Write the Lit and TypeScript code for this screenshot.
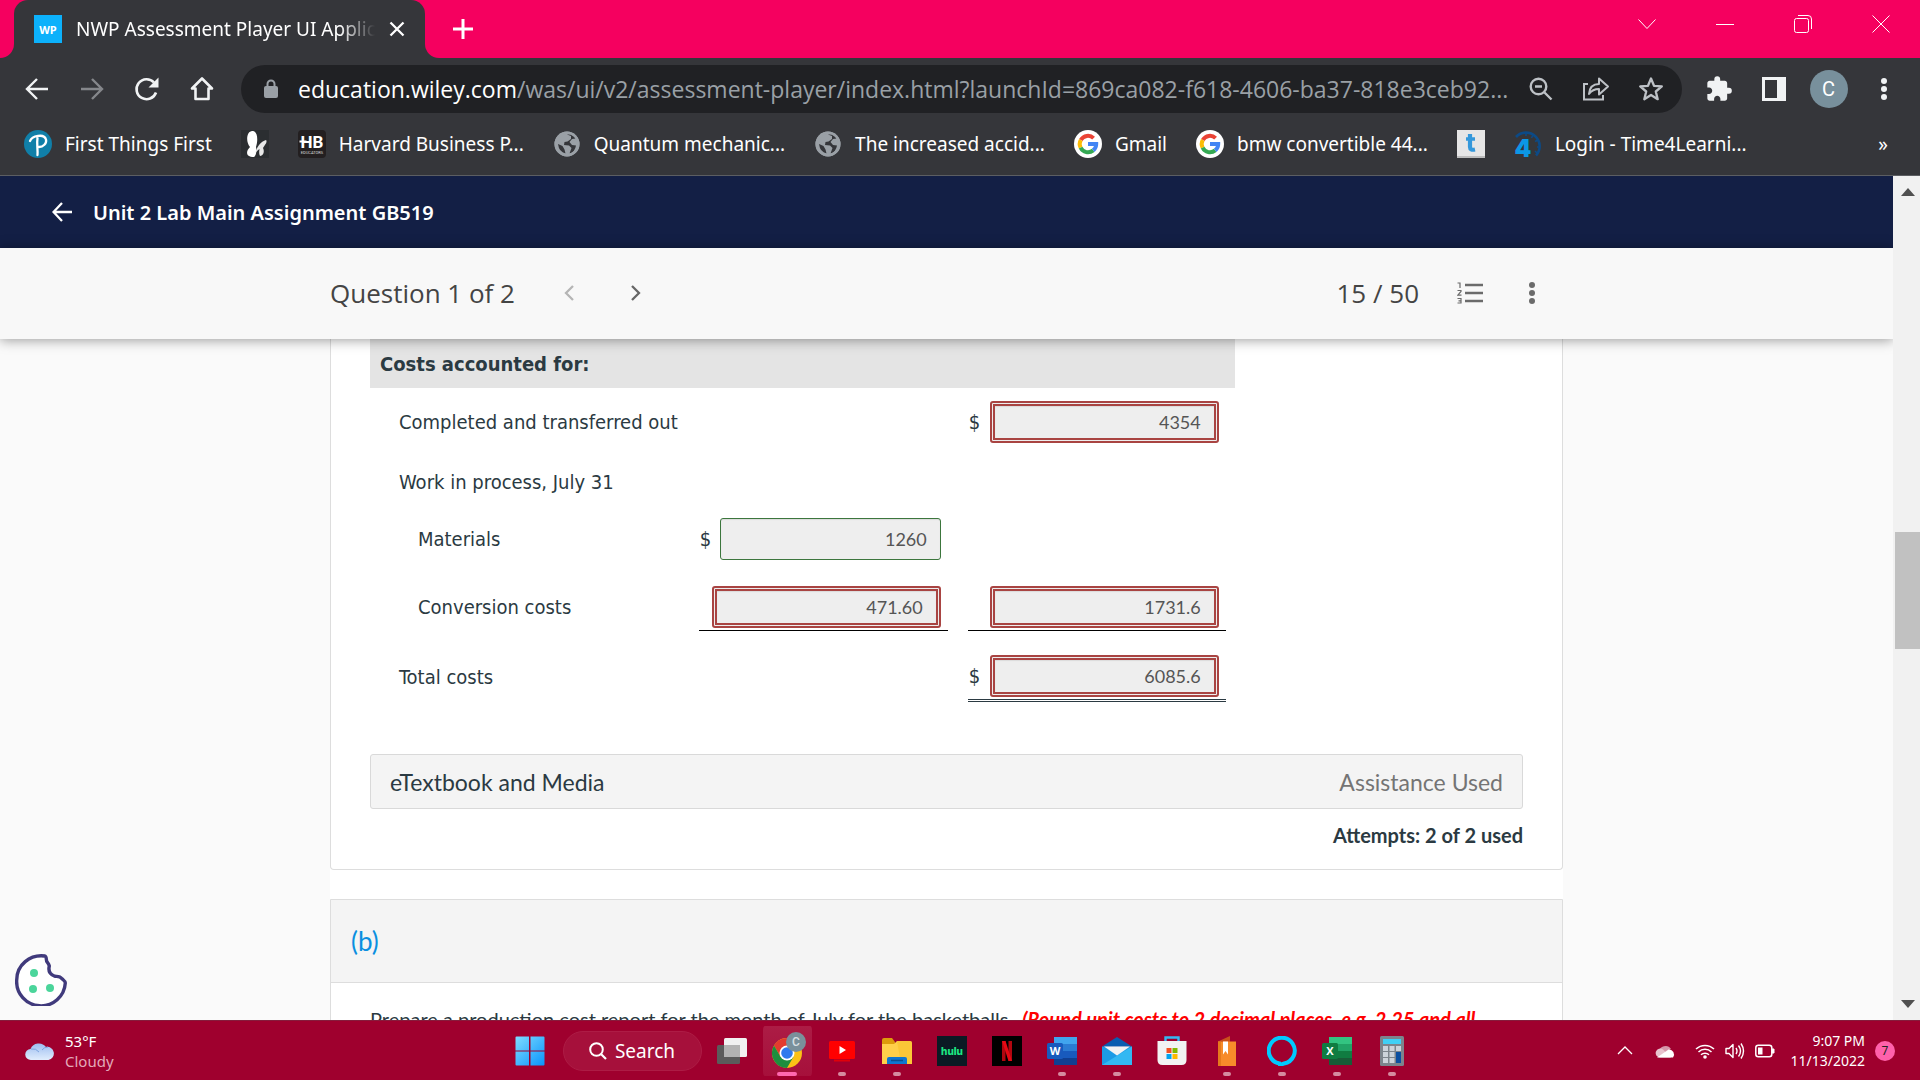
import { LitElement, html, css, svg, nothing } from "lit";
import { customElement } from "lit/decorators.js";

/* ---------- icon helpers ---------- */

const icon = (w: number, h: number, viewBox: string, body: unknown) =>
  html`<svg width=${w} height=${h} viewBox=${viewBox} fill="none" aria-hidden="true">${body}</svg>`;

const close = icon(16, 16, "0 0 16 16", svg`<path d="M1.500 1.500l13 13M14.500 1.500l-13 13" stroke="#fff" stroke-width="2.300"/>`);
const plus = icon(22, 22, "0 0 22 22", svg`<path d="M11 1v20M1 11h20" stroke="#fff" stroke-width="3"/>`);
const back = icon(24, 22, "0 0 24 22", svg`<path d="M23 11H2M12 1L2 11l10 10" stroke="#f1f3f4" stroke-width="2.4"/>`);
const forward = icon(24, 22, "0 0 24 22", svg`<path d="M1 11h21M12 1l10 10-10 10" stroke="#85878b" stroke-width="2.4"/>`);
const reload = icon(26, 26, "0 0 26 26", svg`<path d="M22 16.5A10 10 0 1 1 20 6.5" stroke="#f1f3f4" stroke-width="2.6"/><path d="M24.500 1.500v10h-10z" fill="#f1f3f4"/>`);
const home = icon(26, 26, "0 0 26 26", svg`<path d="M13 2.500L3 12.500h3.500V23h13V12.500H23z" stroke="#f1f3f4" stroke-width="2.6" stroke-linejoin="round"/>`);
const lock = icon(16, 20, "0 0 16 20", svg`<rect x="1" y="7" width="14" height="12" rx="2" fill="#9aa0a6"/><path d="M4.500 8V5a3.500 3.500 0 0 1 7 0v3" stroke="#9aa0a6" stroke-width="2"/>`);
const zoomOut = icon(26, 26, "0 0 26 26", svg`<circle cx="10.500" cy="10.500" r="7.800" stroke="#bdc1c6" stroke-width="2.400"/><path d="M16.500 16.500l7 7M7 10.500h7" stroke="#bdc1c6" stroke-width="2.400"/>`);
const share = icon(28, 26, "0 0 28 26", svg`<path d="M6 8H2v15.500h19V19" stroke="#bdc1c6" stroke-width="2"/><path d="M7 18c.5-6.500 4-10 10-10V2.500l9 8-9 8V13c-4.500 0-7.500 1.500-10 5z" stroke="#bdc1c6" stroke-width="2" stroke-linejoin="round"/>`);
const star = icon(26, 26, "0 0 26 26", svg`<path d="M13 2.500l3 7.300 7.800.6-6 5.100 1.900 7.700-6.700-4.200-6.700 4.200 1.900-7.700-6-5.100 7.800-.6z" stroke="#bdc1c6" stroke-width="2.300" stroke-linejoin="round"/>`);
const puzzle = icon(28, 28, "0 0 24 24", svg`<path fill="#f1f3f4" d="M20.500 11H19V7c0-1.100-.9-2-2-2h-4V3.500a2.500 2.500 0 0 0-5 0V5H4c-1.100 0-2 .9-2 2v3.800h1.500c1.500 0 2.700 1.200 2.700 2.700S5 16.200 3.500 16.200H2V20c0 1.100.9 2 2 2h3.800v-1.500c0-1.500 1.200-2.700 2.700-2.700s2.700 1.200 2.700 2.700V22H17c1.100 0 2-.9 2-2v-4h1.500a2.500 2.500 0 0 0 0-5z"/>`);
const panel = icon(26, 24, "0 0 26 24", svg`<path fill="#f1f3f4" fill-rule="evenodd" d="M1 0h24v24H1zM4 3v18h12V3z"/>`);
const dots = (c: string, r = 3) =>
  icon(8, 24, "0 0 8 24", svg`<circle cx="4" cy="4" r=${r} fill=${c}/><circle cx="4" cy="12" r=${r} fill=${c}/><circle cx="4" cy="20" r=${r} fill=${c}/>`);

const winIcons = [
  { name: "Search tabs", art: icon(18, 10, "0 0 18 10", svg`<path d="M.5.5L9 9.500 17.500.5" stroke="#fff"/>`) },
  { name: "Minimize", art: icon(18, 10, "0 0 18 10", svg`<path d="M0 5.500h18" stroke="#fff"/>`) },
  { name: "Restore", art: icon(18, 18, "0 0 18 18", svg`<rect x=".5" y="3.500" width="14" height="14" rx="2" stroke="#fff"/><path d="M4 .5h10a3.500 3.500 0 0 1 3.500 3.500v10" stroke="#fff"/>`) },
  { name: "Close", art: icon(18, 18, "0 0 18 18", svg`<path d="M.5.5l17 17M17.500.5l-17 17" stroke="#fff"/>`) },
];

/* ---------- bookmark icons ---------- */

const globe = icon(28, 28, "0 0 28 28", svg`<circle cx="14" cy="14" r="12.500" fill="#9aa0a6"/><path d="M14 4.500l4 1.500v3l-3.500 2.500-3 .5-.5 3 5 .5 2.500 2.500-2 5.500q5.500-1.500 6.500-8l-4-.5-2.500-3 2.500-3 4-.5q-3-5-9-4zM5 14l4.500 2 2 3.500 1 4q-6.500-1.500-7.500-9.500z" fill="#35363a"/><circle cx="14" cy="14" r="11.300" stroke="#9aa0a6" stroke-width="2.500"/>`);
const google = icon(28, 28, "0 0 28 28", svg`<circle cx="14" cy="14" r="14" fill="#fff"/><g stroke-width="4"><path d="M6.800 10A8.200 8.200 0 0 1 19.600 8.100" stroke="#ea4335"/><path d="M6.600 17.700a8.200 8.200 0 0 1 .2-7.700" stroke="#fbbc05"/><path d="M19.200 20.400a8.200 8.200 0 0 1-12.600-2.700" stroke="#34a853"/><path d="M14 14h8.200a8.200 8.200 0 0 1-3 6.400" stroke="#4285f4"/></g>`);
const pearson = icon(28, 28, "0 0 28 28", svg`<circle cx="14" cy="14" r="14" fill="#107fa8"/><path d="M6 11c2-5 14-8 16-1.500 1 4-3 7.500-7 7.500M13.500 8c-1 6 .5 12 0 17" stroke="#fff" stroke-width="2.300" stroke-linecap="round"/>`);
const butterfly = icon(28, 28, "0 0 28 28", svg`<rect width="28" height="28" fill="#2b2e31"/><path d="M13 27C4 27 5 21 9 17 4 11 6 0 12 1c5 1 5 10 3 16 1 4 0 9-2 10z" fill="#fff"/><path d="M14.500 23C15 18 20 11 25 10c2 2-2 6-3 8 2 4 0 8-3 8-1-2-1-4-.5-7-2 1-3 3-4 4z" fill="#e8e8e8"/>`);
const harvard = icon(28, 28, "0 0 28 28", svg`<rect width="28" height="28" rx="4" fill="#231f20"/><text x="14" y="18" text-anchor="middle" fill="#fff" font-family="Roboto, sans-serif" font-weight="700" font-size="17">HB</text><path d="M1.500 11.500h7" stroke="#fff" stroke-width="2"/><text x="14" y="24" text-anchor="middle" fill="#ddd" font-family="Roboto, sans-serif" font-size="4">EDUCATORS</text>`);
const tee = icon(28, 28, "0 0 28 28", svg`<rect width="28" height="28" fill="#e6e6e6"/><rect y="26" width="28" height="2" fill="#bdbdbd"/><path d="M13 4v13q0 3.500 5 2.500" stroke="#3498db" stroke-width="4.200"/><path d="M9 9h9" stroke="#3498db" stroke-width="3.500"/>`);
const time4 = icon(28, 28, "0 0 28 28", svg`<path d="M2 7A13 13 0 1 1 22 25.500" stroke="#0c4a86" stroke-width="2.600"/><path d="M12 3v3M19 5l-1.500 3M24 10l-3 1.500M26 17h-3M23 23l-2-2" stroke="#0c4a86" stroke-width="1.600"/><text x="9" y="27" text-anchor="middle" fill="#0b97e6" font-family="Inter, sans-serif" font-weight="900" font-size="24">4</text>`);

interface Bookmark { label: string; art: unknown; title: string }
const bookmarks: Bookmark[] = [
  { label: "First Things First", title: "First Things First", art: pearson },
  { label: "", title: "Bookmark", art: butterfly },
  { label: "Harvard Business P...", title: "Harvard Business", art: harvard },
  { label: "Quantum mechanic...", title: "Quantum mechanics", art: globe },
  { label: "The increased accid...", title: "The increased", art: globe },
  { label: "Gmail", title: "Gmail", art: google },
  { label: "bmw convertible 44...", title: "bmw convertible", art: google },
  { label: "", title: "Bookmark", art: tee },
  { label: "Login - Time4Learni...", title: "Login", art: time4 },
];

/* ---------- taskbar icons ---------- */

const windows = icon(30, 30, "0 0 30 30", svg`<defs><linearGradient id="w" x1="0" y1="0" x2="1" y2="1"><stop stop-color="#7fdcff"/><stop offset="1" stop-color="#0a94fb"/></linearGradient></defs><path fill="url(#w)" d="M.5 1.500q0-1 1-1H14v14H.5zM15.500.5h13q1 0 1 1v13h-14zM.5 15.500H14v14H1.500q-1 0-1-1zM15.500 15.500h14v13q0 1-1 1h-13z"/>`);
const taskView = icon(32, 28, "0 0 32 28", svg`<rect x="1" y="8" width="23" height="19" rx="1.500" fill="#5b5b5b"/><rect x="8" y="1" width="23" height="19" rx="1.500" fill="#f1f1f1"/><path d="M8 8h16v12H9.500Q8 20 8 18.500z" fill="#b3b3b3"/>`);
const chrome = icon(38, 38, "0 0 38 38", svg`<g transform="translate(4 6)"><circle cx="15" cy="15" r="15" fill="#fbc116"/><path d="M2 7.500A15 15 0 0 1 28 7.500H15L8.500 18.800z" fill="#e33b2e"/><path d="M2 7.500A15 15 0 0 0 15 30l6.500-11.200H8.500z" fill="#1e8e3e"/><circle cx="15" cy="15" r="7.500" fill="#fff"/><circle cx="15" cy="15" r="5.800" fill="#2f79ee"/></g><circle cx="28" cy="10" r="10" fill="#7a909b"/><text x="28" y="14" text-anchor="middle" font-family="Roboto, sans-serif" font-weight="500" font-size="12" fill="#d9e0e4">C</text>`);
const youtube = icon(28, 24, "0 0 28 24", svg`<rect x="1" y="2" width="26" height="18" rx="1.500" fill="#f00"/><path d="M11.500 7v8l6.500-4z" fill="#fff"/><rect x="6" y="20.500" width="16" height="2" fill="#e0000a"/>`);
const folder = icon(32, 28, "0 0 32 28", svg`<path d="M1 3q0-2 2-2h8l3 4v6H1z" fill="#dd9b0b"/><path d="M1 7h12l3-3h13q2 0 2 2v21H1z" fill="#ffd04a"/><path d="M16 4h13q2 0 2 2v21H20z" fill="#f8c12c" opacity=".6"/><path d="M6 27v-5q0-2 2-2h16q2 0 2 2v5z" fill="#0f77d0"/><path d="M10 23.500h12" stroke="#0a4f91" stroke-width="1.500"/>`);
const hulu = icon(30, 30, "0 0 30 30", svg`<rect width="30" height="30" fill="#0b1a24"/><text x="15" y="19" text-anchor="middle" fill="#1ce783" font-family="Inter, sans-serif" font-weight="800" font-size="10">hulu</text>`);
const netflix = icon(30, 30, "0 0 30 30", svg`<rect width="30" height="30" fill="#000"/><path d="M10 5h3.500v20H10zM16.500 5H20v20h-3.500z" fill="#b1060f"/><path d="M10 5h3.500L20 25h-3.500z" fill="#e50914"/>`);
const office = (letter: string, c: string[]) =>
  icon(30, 28, "0 0 30 28", svg`<rect x="7" y="0" width="23" height="7" fill=${c[0]}/><rect x="7" y="7" width="23" height="7" fill=${c[1]}/><rect x="7" y="14" width="23" height="7" fill=${c[2]}/><rect x="7" y="21" width="23" height="7" fill=${c[3]}/><rect x="0" y="6" width="16" height="16" rx="1.500" fill=${c[4]}/><text x="8" y="18" text-anchor="middle" fill="#fff" font-family="Open Sans, sans-serif" font-weight="700" font-size="11">${letter}</text>`);
const mail = icon(30, 28, "0 0 30 28", svg`<path d="M0 9.500L15 0l15 9.500z" fill="#0a5db0"/><path d="M0 9.500h30V28H0z" fill="#1c9be6"/><path d="M30 9.500V28H0z" fill="#33b8f2"/><path d="M2 9.500h26L15 18.500z" fill="#f3f3f3"/>`);
const store = icon(30, 30, "0 0 30 30", svg`<path d="M8.500 6V1.500h13V6" stroke="#35b8f2" stroke-width="2.400"/><path d="M.5 5h29v19q0 5-5 5h-19q-5 0-5-5z" fill="#f2f2f2"/><path d="M9.500 12h5v5h-5z" fill="#f25022"/><path d="M15.500 12h5v5h-5z" fill="#7fba00"/><path d="M9.500 18h5v5h-5z" fill="#00a4ef"/><path d="M15.500 18h5v5h-5z" fill="#ffb900"/>`);
const book = icon(20, 30, "0 0 20 30", svg`<path d="M1 5.500L13 0v6z" fill="#c9501c"/><path d="M1 5.500h18V30H1z" fill="#f78b2a"/><path d="M1 5.500h3V30H1z" fill="#e57a1c"/><path d="M6 5.500h5v13L8.500 15 6 18.500z" fill="#fff"/>`);
const alexa = icon(30, 30, "0 0 30 30", svg`<path d="M12.500 27.500A13 13 0 1 1 17 27.500L13 29z" stroke="#00caff" stroke-width="4"/>`);
const calc = icon(24, 30, "0 0 24 30", svg`<rect x="0" y="0" width="24" height="30" rx="1.500" fill="#7c848c"/><rect x="3" y="3" width="18" height="5" fill="#3fd0f5"/><path d="M3 10h5v5H3zM9.500 10h5v5h-5zM16 10h5v5h-5zM3 16h5v5H3zM9.500 16h5v5h-5zM3 22h5v5H3zM9.500 22h5v5h-5z" fill="#ccd3da"/><path d="M16 16h5v11h-5z" fill="#0b4fa0"/>`);

interface TaskApp { name: string; art: unknown; open?: boolean; active?: boolean }
const apps: TaskApp[] = [
  { name: "Task View", art: taskView },
  { name: "Google Chrome", art: chrome, active: true },
  { name: "YouTube", art: youtube, open: true },
  { name: "File Explorer", art: folder, open: true },
  { name: "Hulu", art: hulu },
  { name: "Netflix", art: netflix },
  { name: "Word", art: office("W", ["#41a5ee", "#2b7cd3", "#185abd", "#103f91", "#185abd"]), open: true },
  { name: "Mail", art: mail, open: true },
  { name: "Microsoft Store", art: store },
  { name: "Bookmark app", art: book, open: true },
  { name: "Alexa", art: alexa, open: true },
  { name: "Excel", art: office("X", ["#33c481", "#21a366", "#107c41", "#185c37", "#107c41"]), open: true },
  { name: "Calculator", art: calc, open: true },
];

const buttonReset = css`
  :host, * { box-sizing: border-box; }
  button { border: 0; padding: 0; background: none; font: inherit; color: inherit; cursor: pointer; display: flex; align-items: center; justify-content: center; }
  a { color: inherit; text-decoration: none; }
  svg { display: block; flex: none; }
`;

/* ---------- browser frame ---------- */

@customElement("browser-chrome")
export class BrowserChrome extends LitElement {
  static styles = [buttonReset, css`
    :host { display: block; flex: none; background: #35363a; color: #fff; font-family: "Noto Sans", "Open Sans", sans-serif; border-bottom: 1px solid #5c5e62; }
    .tabs { height: 58px; background: #f5005f; display: flex; align-items: stretch; }
    .edge { width: 14px; background: #35363a; }
    .edge::before { content: ""; display: block; height: 100%; background: #f5005f; border-bottom-right-radius: 14px; }
    .edge.right::before { border-radius: 0 0 0 14px; }
    .tab { width: 411px; background: #35363a; border-radius: 14px 14px 0 0; display: flex; align-items: center; gap: 14px; padding: 0 20px; }
    .wp { width: 28px; height: 28px; background: #0cb1fb; font: 700 11px "Open Sans", sans-serif; display: grid; place-items: center; flex: none; }
    .title { flex: 1; min-width: 0; overflow: hidden; white-space: nowrap; font-size: 19px; -webkit-mask-image: linear-gradient(to right, #000 88%, transparent); mask-image: linear-gradient(to right, #000 88%, transparent); }
    .new { margin-left: 12px; width: 24px; }
    .win { margin-left: auto; display: flex; }
    .win button { width: 78px; height: 48px; }
    .toolbar { height: 62px; display: flex; align-items: center; padding: 0 9px; }
    .toolbar > button { width: 55px; height: 48px; }
    .omni { flex: 1; min-width: 0; height: 48px; margin: 0 9px 0 12px; border-radius: 24px; background: #202124; display: flex; align-items: center; padding: 0 4px 0 22px; }
    .omni button { width: 55px; height: 48px; }
    .url { flex: 1; min-width: 0; margin-left: 19px; font-family: "Open Sans", sans-serif; font-size: 23px; white-space: nowrap; color: #9aa0a6; }
    .url b { font-weight: 400; color: #fff; }
    .avatar { width: 38px; height: 38px; border-radius: 50%; background: #78909c; display: grid; place-items: center; font: 20px Roboto, sans-serif; }
    .marks { height: 55px; display: flex; align-items: center; gap: 29px; padding: 0 32px 8px 24px; font-size: 19px; white-space: nowrap; }
    .marks a { display: flex; align-items: center; gap: 13px; }
    .more { margin-left: auto; }
  `];

  render() {
    return html`
      <div class="tabs">
        <span class="edge"></span>
        <div class="tab"><span class="wp">WP</span><span class="title">NWP Assessment Player UI Application</span><button aria-label="Close tab">${close}</button></div>
        <span class="edge right"></span>
        <button class="new" aria-label="New tab">${plus}</button>
        <div class="win">${winIcons.map((w) => html`<button aria-label=${w.name}>${w.art}</button>`)}</div>
      </div>
      <div class="toolbar">
        <button aria-label="Back">${back}</button>
        <button aria-label="Forward">${forward}</button>
        <button aria-label="Reload">${reload}</button>
        <button aria-label="Home">${home}</button>
        <div class="omni">
          ${lock}
          <span class="url"><b>education.wiley.com</b>/was/ui/v2/assessment-player/index.html?launchId=869ca082-f618-4606-ba37-818e3ceb92...</span>
          <button aria-label="Zoom">${zoomOut}</button>
          <button aria-label="Share">${share}</button>
          <button aria-label="Bookmark this page">${star}</button>
        </div>
        <button aria-label="Extensions">${puzzle}</button>
        <button aria-label="Side panel">${panel}</button>
        <button aria-label="Profile"><span class="avatar">C</span></button>
        <button aria-label="Menu">${dots("#f1f3f4")}</button>
      </div>
      <nav class="marks" aria-label="Bookmarks">
        ${bookmarks.map((b) => html`<a href="#" aria-label=${b.title}>${b.art}${b.label ? html`<span>${b.label}</span>` : nothing}</a>`)}
        <button class="more" aria-label="More bookmarks">»</button>
      </nav>`;
  }
}

/* ---------- cost table ---------- */

interface Amount { id: string; value: string; dollar?: boolean; correct?: boolean; rule?: "single" | "double" }
interface CostRow { label: string; size: string; indent?: boolean; a?: Amount; b?: Amount }

const rows: CostRow[] = [
  { label: "Completed and transferred out", size: "mid", b: { id: "out", value: "4354", dollar: true } },
  { label: "Work in process, July 31", size: "short" },
  { label: "Materials", size: "low", indent: true, a: { id: "mat", value: "1260", dollar: true, correct: true } },
  { label: "Conversion costs", size: "tall", indent: true, a: { id: "conv", value: "471.60", rule: "single" }, b: { id: "wip", value: "1731.6", rule: "single" } },
  { label: "Total costs", size: "mid", b: { id: "total", value: "6085.6", dollar: true, rule: "double" } },
];

@customElement("cost-table")
export class CostTable extends LitElement {
  static styles = [buttonReset, css`
    :host { display: block; color: #2b3a42; font-family: "DejaVu Sans Condensed", "Noto Sans", sans-serif; font-size: 20px; }
    table { width: 75%; min-width: 760px; border-collapse: collapse; table-layout: fixed; }
    th, td { padding: 0; text-align: left; font-weight: 400; }
    .head { height: 49px; background: #e4e4e4; padding-left: 10px; font-weight: 700; }
    .short { height: 51px; }
    .low { height: 64px; }
    .mid { height: 68px; }
    .tall { height: 72px; }
    .label { padding-left: 29px; }
    .indent { padding-left: 48px; }
    .first { width: 269px; padding-right: 20px; }
    .second { width: 267px; padding-right: 9px; }
    .amount { display: flex; align-items: center; justify-content: space-between; padding: 3px 7px 2px 1px; border-bottom: 1px solid transparent; }
    .single { border-bottom: 1px solid #000; }
    .double { border-bottom: 3px double #2b3a42; }
    input { width: 229px; height: 42px; margin: 0 0 0 auto; text-align: right; font: 18px Lato, sans-serif; color: #555; background: #eee; border: 5px double #a94442; border-radius: 3px; padding: 0 13px; box-shadow: inset 0 1px 1px rgba(0, 0, 0, .08); outline: 0; }
    input.ok { width: 221px; border: 1px solid #3c763d; }
  `];

  private cell(row: CostRow, amount: Amount | undefined, cls: string) {
    return html`<td class=${cls}>${amount
      ? html`<div class="amount ${amount.rule ?? ""}">${amount.dollar ? html`<span>$</span>` : nothing}<input id=${amount.id} aria-label=${row.label} class=${amount.correct ? "ok" : "wrong"} type="text" readonly .value=${amount.value}></div>`
      : nothing}</td>`;
  }

  render() {
    return html`<table>
      <colgroup><col><col class="first"><col class="second"></colgroup>
      <thead><tr><th class="head" colspan="3">Costs accounted for:</th></tr></thead>
      <tbody>${rows.map((r) => html`<tr class=${r.size}>
        <th scope="row" class="label ${r.indent ? "indent" : ""}">${r.label}</th>
        ${this.cell(r, r.a, "first")}${this.cell(r, r.b, "second")}
      </tr>`)}</tbody>
    </table>`;
  }
}

/* ---------- assessment page ---------- */

const navBack = icon(20, 20, "0 0 20 20", svg`<path d="M20 10H2M10 1L1.500 10l8.500 9" stroke="#fff" stroke-width="2.300"/>`);
const chev = (d: string, c: string) => icon(10, 16, "0 0 10 16", svg`<path d=${d} stroke=${c} stroke-width="2.300"/>`);
const list = icon(26, 24, "0 0 26 24", svg`<path d="M8 4h18M8 12h18M8 20h18" stroke="#6b6b6b" stroke-width="2.400"/><path d="M.5 2H3v5M.5 9.500H4v1L.8 14.200H4.500M.5 17.500H4V22H.5M1.500 19.800H4" stroke="#6b6b6b" stroke-width="1.200"/>`);
const cookie = icon(52, 52, "1 1 52 52", svg`<path d="M31 3C16 1 2.700 12 2.700 27a24.300 24.300 0 0 0 48.600 3c0-2-2-3-3-4-3-4-6-2-8-3-5-2-6-6-5-10-1-4-3-3-3-7 0-2-1-3-1.300-3z" fill="#fff" stroke="#403a7c" stroke-width="3.400" stroke-linejoin="round"/><circle cx="20" cy="20" r="4" fill="#4bd59b"/><circle cx="19" cy="36" r="4" fill="#4bd59b"/><circle cx="36" cy="35" r="4" fill="#4bd59b"/>`);

@customElement("assessment-page")
export class AssessmentPage extends LitElement {
  static styles = [buttonReset, css`
    :host { display: flex; flex: 1; min-height: 0; position: relative; font-family: Lato, sans-serif; color: #2b3a42; }
    .page { flex: 1; min-width: 0; display: flex; flex-direction: column; background: #fafafa; overflow: hidden; }
    .nav { flex: none; height: 72px; background: #131f45; color: #fff; display: flex; align-items: center; gap: 21px; padding: 0 52px; font-family: "Noto Sans", "Open Sans", sans-serif; }
    h1 { margin: 0; font-size: 20px; font-weight: 600; }
    .bar { flex: none; background: #f8f8f8; box-shadow: 0 1px 12px rgba(0, 0, 0, .4); z-index: 1; }
    .inner { max-width: 1233px; height: 91px; margin: 0 auto; padding-bottom: 1px; display: flex; align-items: center; font: 26px "Open Sans", sans-serif; color: #444; }
    .inner button { width: 40px; height: 40px; }
    .prev { margin-left: 34px; }
    .next { margin-left: 27px; }
    .score { margin-left: auto; }
    .list { margin-left: 31px; }
    .menu { margin: 0 11px 0 22px; }
    .scroll { flex: 1; min-height: 0; overflow: hidden; }
    .stack { max-width: 1233px; margin: 0 auto; display: flex; flex-direction: column; gap: 29px; background: #fff; }
    .card { border: 1px solid #ddd; background: #fff; border-radius: 0 0 4px 4px; }
    .part { border-top: 0; padding: 0 39px 20px; }
    .media { margin-top: 43px; height: 55px; padding: 0 19px; display: flex; align-items: center; justify-content: space-between; background: #f4f4f4; border: 1px solid #d9d9d9; border-radius: 3px; font-size: 23px; }
    .media button { color: #2b3a42; }
    .used { color: #747474; }
    .attempts { margin: 12px 0 0; text-align: right; font-size: 20px; line-height: 28px; font-weight: 700; }
    h2 { margin: 0; height: 83px; padding: 0 20px; display: flex; align-items: center; background: #f4f4f4; border-bottom: 1px solid #ddd; color: #0a8fe0; font-size: 26px; font-weight: 400; }
    .task { margin: 0; padding: 21px 39px; font-size: 20px; line-height: 30px; }
    .task em { color: #f00; font-weight: 700; margin-left: 4px; }
    .track { flex: none; width: 27px; background: #f1f1f1; padding-left: 2px; display: flex; flex-direction: column; }
    .track button { height: 32px; width: 100%; }
    .above { flex: 325; }
    .thumb { flex: 117; background: #c1c1c1; }
    .below { flex: 340; }
    .cookie { position: absolute; left: 15px; bottom: 14px; }
  `];

  render() {
    return html`
      <div class="page">
        <header class="nav"><button aria-label="Back to assignments">${navBack}</button><h1>Unit 2 Lab Main Assignment GB519</h1></header>
        <div class="bar"><div class="inner">
          <span>Question 1 of 2</span>
          <button class="prev" aria-label="Previous question">${chev("M9 1L2 8l7 7", "#b5b5b5")}</button>
          <button class="next" aria-label="Next question">${chev("M1 1l7 7-7 7", "#666")}</button>
          <span class="score">15 / 50</span>
          <button class="list" aria-label="Question list">${list}</button>
          <button class="menu" aria-label="More options">${dots("#6b6b6b")}</button>
        </div></div>
        <main class="scroll"><div class="stack">
          <section class="card part">
            <cost-table></cost-table>
            <div class="media"><button>eTextbook and Media</button><span class="used">Assistance Used</span></div>
            <p class="attempts">Attempts: 2 of 2 used</p>
          </section>
          <section class="card">
            <h2>(b)</h2>
            <p class="task">Prepare a production cost report for the month of July for the basketballs. <em>(Round unit costs to 2 decimal places, e.g. 2.25 and all</em></p>
          </section>
        </div></main>
      </div>
      <div class="track">
        <button aria-label="Scroll up">${icon(14, 8, "0 0 14 8", svg`<path d="M0 8l7-8 7 8z" fill="#505050"/>`)}</button>
        <span class="above"></span><span class="thumb"></span><span class="below"></span>
        <button aria-label="Scroll down">${icon(14, 8, "0 0 14 8", svg`<path d="M0 0l7 8 7-8z" fill="#505050"/>`)}</button>
      </div>
      <button class="cookie" aria-label="Cookie preferences">${cookie}</button>`;
  }
}

/* ---------- taskbar ---------- */

const cloud = icon(30, 20, "0 0 30 20", svg`<defs><linearGradient id="c" x1="0" y1="0" x2="0" y2="1"><stop stop-color="#9dbdf0"/><stop offset="1" stop-color="#e0edfd"/></linearGradient></defs><path d="M6 19a5.500 5.500 0 0 1-.5-11A9 9 0 0 1 21 6a6.600 6.600 0 0 1 2.500 13z" fill="url(#c)"/><path d="M6 8q5-1 8 3M17 9q2-3 6-3" stroke="#7ba3e0"/>`);
const search = icon(18, 18, "0 0 18 18", svg`<circle cx="7.500" cy="7.500" r="6.300" stroke="#fff" stroke-width="2"/><path d="M12 12l5 5" stroke="#fff" stroke-width="2.200"/>`);
const chevUp = icon(16, 9, "0 0 16 9", svg`<path d="M1 8l7-7 7 7" stroke="#fff" stroke-width="1.300"/>`);
const oneDrive = icon(20, 14, "0 0 20 14", svg`<path d="M4 8a6.500 6.500 0 0 1 12-3l-9 5z" fill="#d695a9"/><path d="M5 13.500A4.500 4.500 0 1 1 8 5.500l8 8z" fill="#e8c3ce"/><path d="M2 13.500L13.500 5.500A5 5 0 0 1 18 13.500z" fill="#fff"/>`);
const wifi = icon(20, 16, "0 0 20 16", svg`<path d="M1 6a13 13 0 0 1 18 0M3.500 9a9.300 9.300 0 0 1 13 0M6 11.800a5.800 5.800 0 0 1 8 0" stroke="#fff" stroke-width="1.500"/><circle cx="10" cy="14" r="1.800" fill="#fff"/>`);
const volume = icon(20, 18, "0 0 20 18", svg`<path d="M1 6.500h3l4-4v13l-4-4H1z" stroke="#fff" stroke-width="1.400" stroke-linejoin="round"/><path d="M11 6q2 3 0 6M13.500 3.500q4 5.500 0 11M16 1.500q5 7.500 0 15" stroke="#fff" stroke-width="1.400"/>`);
const battery = icon(20, 14, "0 0 20 14", svg`<rect x=".8" y="1.200" width="16" height="11.600" rx="2.500" stroke="#fff" stroke-width="1.500"/><rect x="3" y="3.500" width="4.500" height="7" fill="#fff"/><path d="M17 5h2v4h-2z" fill="#fff" stroke="#fff"/>`);

@customElement("desktop-taskbar")
export class DesktopTaskbar extends LitElement {
  static styles = [buttonReset, css`
    :host { flex: none; height: 60px; display: grid; grid-template-columns: 1fr auto 1fr; align-items: center; background: #9f002e; border-top: 1px solid #861c3c; color: #fff; font: 15px "Noto Sans", "Open Sans", sans-serif; line-height: 20px; }
    .weather { justify-self: start; display: flex; gap: 10px; padding-left: 25px; text-align: left; }
    .weather small { display: block; font-size: 15px; color: #e3a9b9; }
    .apps { display: flex; align-items: center; padding-left: 2px; }
    .start { width: 55px; height: 55px; }
    .search { width: 139px; height: 40px; margin: 0 3px 0 5px; border-radius: 20px; background: #a6103b; border: 1px solid #ad1c45; gap: 8px; font-size: 19px; }
    .app { width: 55px; height: 50px; position: relative; border-radius: 5px; }
    .app.active { background: linear-gradient(#ac1c45, #a6103b) content-box; padding: 0 3px; }
    .app::after { content: ""; position: absolute; left: 50%; bottom: 0; height: 4px; border-radius: 2px; transform: translateX(-50%); }
    .app.open::after { width: 8px; background: #d58ba0; }
    .app.active::after { width: 20px; background: #ff67b0; }
    .tray { justify-self: end; display: flex; align-items: center; gap: 10px; padding-right: 25px; }
    .up { margin-right: 12px; }
    .drive { margin-right: 10px; }
    .clock { margin-left: 6px; text-align: right; font-size: 14px; }
    .badge { width: 20px; height: 20px; border-radius: 50%; background: #ff61ab; color: #222; font-size: 12px; display: grid; place-items: center; }
  `];

  render() {
    return html`
      <button class="weather">${cloud}<span>53°F<small>Cloudy</small></span></button>
      <div class="apps">
        <button class="start" aria-label="Start">${windows}</button>
        <button class="search">${search}Search</button>
        ${apps.map((a) => html`<button class="app ${a.active ? "active" : ""} ${a.open ? "open" : ""}" aria-label=${a.name}>${a.art}</button>`)}
      </div>
      <div class="tray">
        <button class="up" aria-label="Show hidden icons">${chevUp}</button>
        <button class="drive" aria-label="OneDrive">${oneDrive}</button>
        ${wifi}${volume}${battery}
        <span class="clock">9:07 PM<br>11/13/2022</span>
        <span class="badge">7</span>
      </div>`;
  }
}

@customElement("app-root")
export class AppRoot extends LitElement {
  static styles = css`
    :host { display: flex; flex-direction: column; height: 100vh; overflow: hidden; }
  `;

  render() {
    return html`<browser-chrome></browser-chrome><assessment-page></assessment-page><desktop-taskbar></desktop-taskbar>`;
  }
}
